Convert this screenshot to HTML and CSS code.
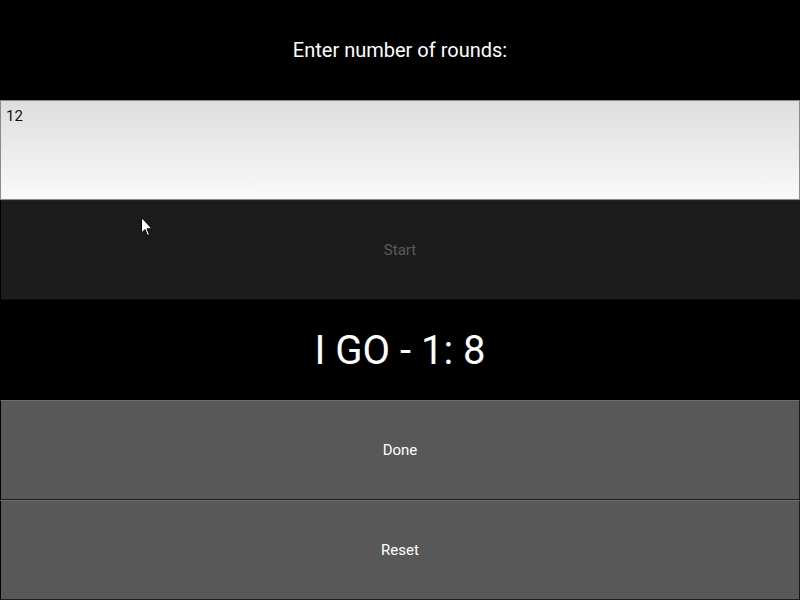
FILE: index.html
```html
<!DOCTYPE html>
<html>
<head>
<meta charset="utf-8">
<link rel="stylesheet" href="styles.css">
</head>
<body>
<div class="app">
  <div class="row label">Enter number of rounds:</div>
  <div class="row input"><span class="input-text">12</span></div>
  <div class="row btn disabled">Start</div>
  <div class="row big">I GO - 1: 8</div>
  <div class="row btn">Done</div>
  <div class="row btn">Reset</div>
</div>
<svg class="cursor" width="14" height="22" viewBox="0 0 14 22">
  <path d="M0.5 0.5 L0.5 16 L4 12.5 L6.5 18.5 L8.5 17.6 L6 11.8 L11 11.8 Z" fill="#fff" stroke="#000" stroke-width="1"/>
</svg>
</body>
</html>
```
FILE: styles.css
```css
html, body {
  margin: 0;
  padding: 0;
  background: #000;
}
body {
  width: 800px;
  height: 600px;
  overflow: hidden;
  position: relative;
  font-family: Roboto, "Liberation Sans", sans-serif;
}
.app {
  display: flex;
  flex-direction: column;
  width: 800px;
  height: 600px;
}
.row {
  height: 100px;
  box-sizing: border-box;
  flex: none;
}
.label {
  display: flex;
  align-items: center;
  justify-content: center;
  color: #fff;
  font-size: 20px;
}
.big {
  display: flex;
  align-items: center;
  justify-content: center;
  color: #fff;
  font-size: 40px;
}
.input {
  border: 1px solid #8a8a8a;
  background: linear-gradient(to bottom, #dedede, #f9f9f9);
  padding: 5px 5px;
}
.input-text {
  color: #111;
  font-size: 15px;
  line-height: 18px;
}
.btn {
  display: flex;
  align-items: center;
  justify-content: center;
  background: #585858;
  color: #fff;
  font-size: 15px;
  border-left: 1px solid #000;
  border-right: 1px solid #1a1a1a;
  border-top: 1px solid #6e6e6e;
  border-bottom: 1px solid #1e1e1e;
}
.btn.disabled {
  background: #1c1c1c;
  color: #5a5a5a;
  border-top-color: #222;
  border-bottom-color: #0c0c0c;
}
.cursor {
  position: absolute;
  left: 141px;
  top: 217px;
}
```
